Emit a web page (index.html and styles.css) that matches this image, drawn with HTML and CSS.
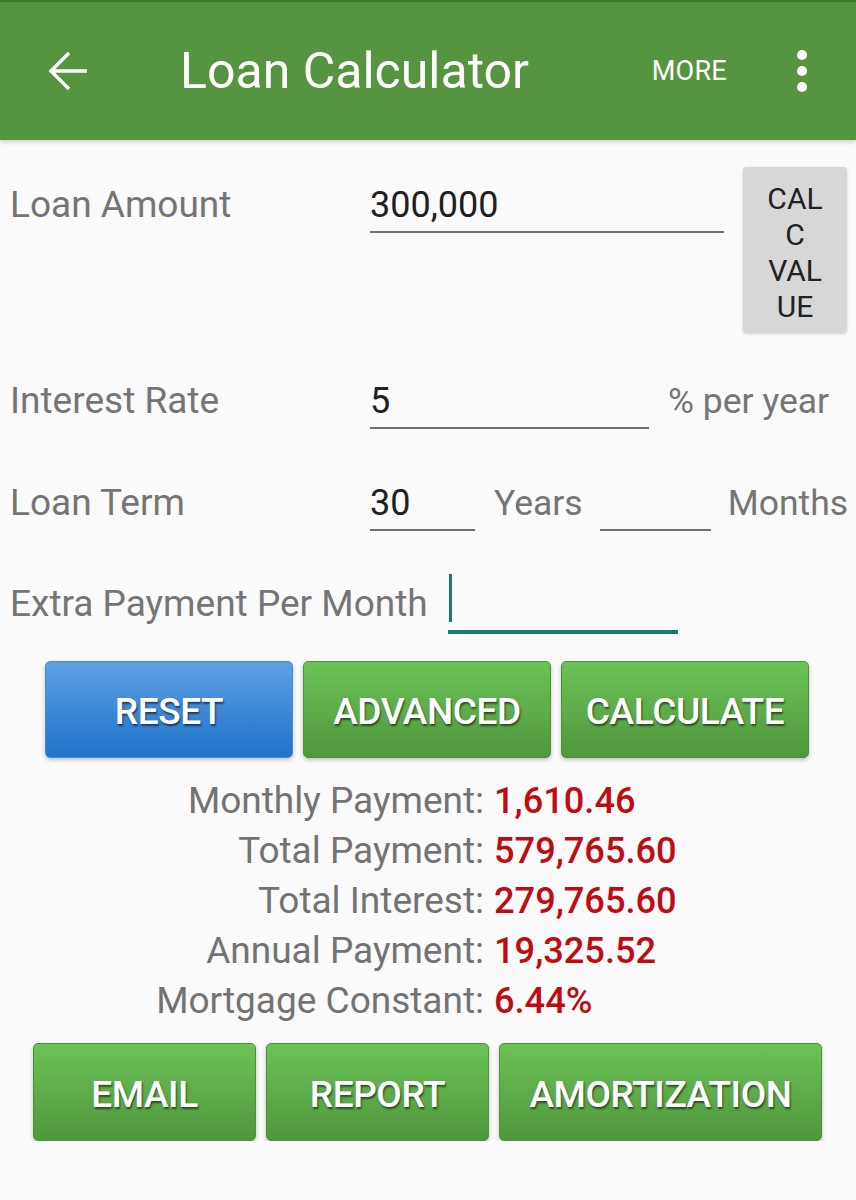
FILE: index.html
```html
<!DOCTYPE html>
<html lang="en">
<head>
<meta charset="utf-8">
<title>Loan Calculator</title>
<link rel="stylesheet" href="styles.css">
</head>
<body>
<header class="appbar">
  <svg class="back" viewBox="0 0 40 40" width="40" height="40" aria-hidden="true">
    <path d="M2 20H38M20 2L2 20L20 38" fill="none" stroke="#fff" stroke-width="3.4" stroke-linecap="butt" stroke-linejoin="miter"/>
  </svg>
  <h1 class="title">Loan Calculator</h1>
  <span class="more">MORE</span>
  <span class="kebab"><i></i><i></i><i></i></span>
</header>

<main class="form">
  <div class="row row-amount">
    <span class="label">Loan Amount</span>
    <span class="field w-amount">300,000</span>
    <button class="calc-value">CAL<br>C<br>VAL<br>UE</button>
  </div>
  <div class="row row-rate">
    <span class="label">Interest Rate</span>
    <span class="field w-rate">5</span>
    <span class="unit">% per year</span>
  </div>
  <div class="row row-term">
    <span class="label">Loan Term</span>
    <span class="field w-years">30</span>
    <span class="unit">Years</span>
    <span class="field w-months"></span>
    <span class="unit">Months</span>
  </div>
  <div class="row row-extra">
    <span class="label label-auto">Extra Payment Per Month</span>
    <span class="field field-focus w-extra"><i class="cursor"></i></span>
  </div>

  <div class="btn-row btn-row-top">
    <button class="btn btn-blue">RESET</button>
    <button class="btn btn-green">ADVANCED</button>
    <button class="btn btn-green">CALCULATE</button>
  </div>

  <dl class="results">
    <dt>Monthly Payment:</dt><dd>1,610.46</dd>
    <dt>Total Payment:</dt><dd>579,765.60</dd>
    <dt>Total Interest:</dt><dd>279,765.60</dd>
    <dt>Annual Payment:</dt><dd>19,325.52</dd>
    <dt>Mortgage Constant:</dt><dd>6.44%</dd>
  </dl>

  <div class="btn-row btn-row-bottom">
    <button class="btn btn-green w-email">EMAIL</button>
    <button class="btn btn-green w-report">REPORT</button>
    <button class="btn btn-green w-amort">AMORTIZATION</button>
  </div>
</main>
</body>
</html>
```

FILE: styles.css
```css
* { box-sizing: border-box; }

html, body {
  margin: 0;
  padding: 0;
  background: #fafafa;
  font-family: Roboto, "Noto Sans", "Liberation Sans", sans-serif;
}

.appbar {
  height: 140px;
  background: #55953f;
  border-top: 2px solid #3f7a30;
  display: flex;
  align-items: center;
  padding: 0 0 0 49px;
  color: #fff;
  box-shadow: 0 2px 4px rgba(0,0,0,0.18);
  position: relative;
}

.back {
  flex: none;
}

.title {
  margin: 0 0 0 91px;
  font-weight: 400;
  font-size: 50px;
  line-height: 60px;
  flex: 1;
}

.more {
  font-size: 27px;
  font-weight: 400;
  letter-spacing: 0.3px;
  margin-right: 70px;
}

.kebab {
  display: flex;
  flex-direction: column;
  gap: 6px;
  margin-right: 49px;
}
.kebab i {
  display: block;
  width: 10px;
  height: 10px;
  border-radius: 50%;
  background: #fff;
}

.form {
  padding-top: 27px;
}

.row {
  display: flex;
  align-items: flex-start;
  font-size: 37px;
}

.label {
  width: 370px;
  padding-left: 10px;
  color: #757575;
  line-height: 44px;
  flex: none;
}
.label-auto { width: auto; margin-right: 20px; }

.field {
  display: block;
  height: 50px;
  border-bottom: 2px solid #6f6f6f;
  color: #202020;
  font-size: 36px;
  line-height: 44px;
  flex: none;
}

.unit {
  color: #757575;
  font-size: 35.5px;
  line-height: 44px;
  flex: none;
}

.row-amount .label,
.row-amount .field { margin-top: 16px; }
.w-amount { width: 354px; }

.calc-value {
  margin-left: 19px;
  width: 104px;
  height: 166px;
  border: none;
  border-radius: 4px;
  background: #d6d7d6;
  box-shadow: 0 1px 3px rgba(0,0,0,0.18);
  font-family: inherit;
  font-size: 30px;
  line-height: 36px;
  color: #222;
  padding: 5px 0 0 0;
}

.row-rate { margin-top: 46px; }
.w-rate { width: 279px; margin-right: 19px; }

.row-term { margin-top: 52px; }
.w-years { width: 105px; margin-right: 19px; }
.w-months { width: 111px; margin: 0 17px 0 17px; }

.row-extra { margin-top: 51px; }
.field-focus {
  border-bottom: 4px solid #177b70;
  height: 52px;
  position: relative;
}
.w-extra { width: 230px; }
.cursor {
  position: absolute;
  left: 1px;
  top: -8px;
  width: 3px;
  height: 48px;
  background: #177b70;
}

.btn-row {
  display: flex;
  gap: 10px;
}
.btn-row-top {
  margin-top: 27px;
  padding-left: 45px;
}
.btn-row-bottom {
  margin-top: 17px;
  padding-left: 33px;
}

.btn {
  width: 248px;
  height: 97px;
  border-radius: 5px;
  font-family: inherit;
  font-size: 37px;
  font-weight: 500;
  color: #fff;
  text-shadow: 1px 2px 2px rgba(0,0,0,0.55);
  padding: 4px 0 0 0;
  box-shadow: 0 2px 4px rgba(0,0,0,0.22);
  letter-spacing: -0.4px;
}
.btn-blue {
  background: linear-gradient(#5d9fe3, #1f73c9);
  border: 1px solid #4a8fd4;
}
.btn-green {
  background: linear-gradient(#6cc257, #4f973c);
  border: 1px solid #4f8f3e;
}
.btn-row-bottom .btn { height: 98px; }
.w-email, .w-report { width: 223px; }
.w-amort { width: 323px; }

.results {
  margin: 18px 0 0 0;
  display: grid;
  grid-template-columns: 484px auto;
  column-gap: 10px;
  font-size: 37px;
  line-height: 50px;
}
.results dt {
  text-align: right;
  color: #737373;
}
.results dd {
  margin: 0;
  color: #bd0d12;
  font-weight: 500;
  font-size: 36.2px;
}
```
